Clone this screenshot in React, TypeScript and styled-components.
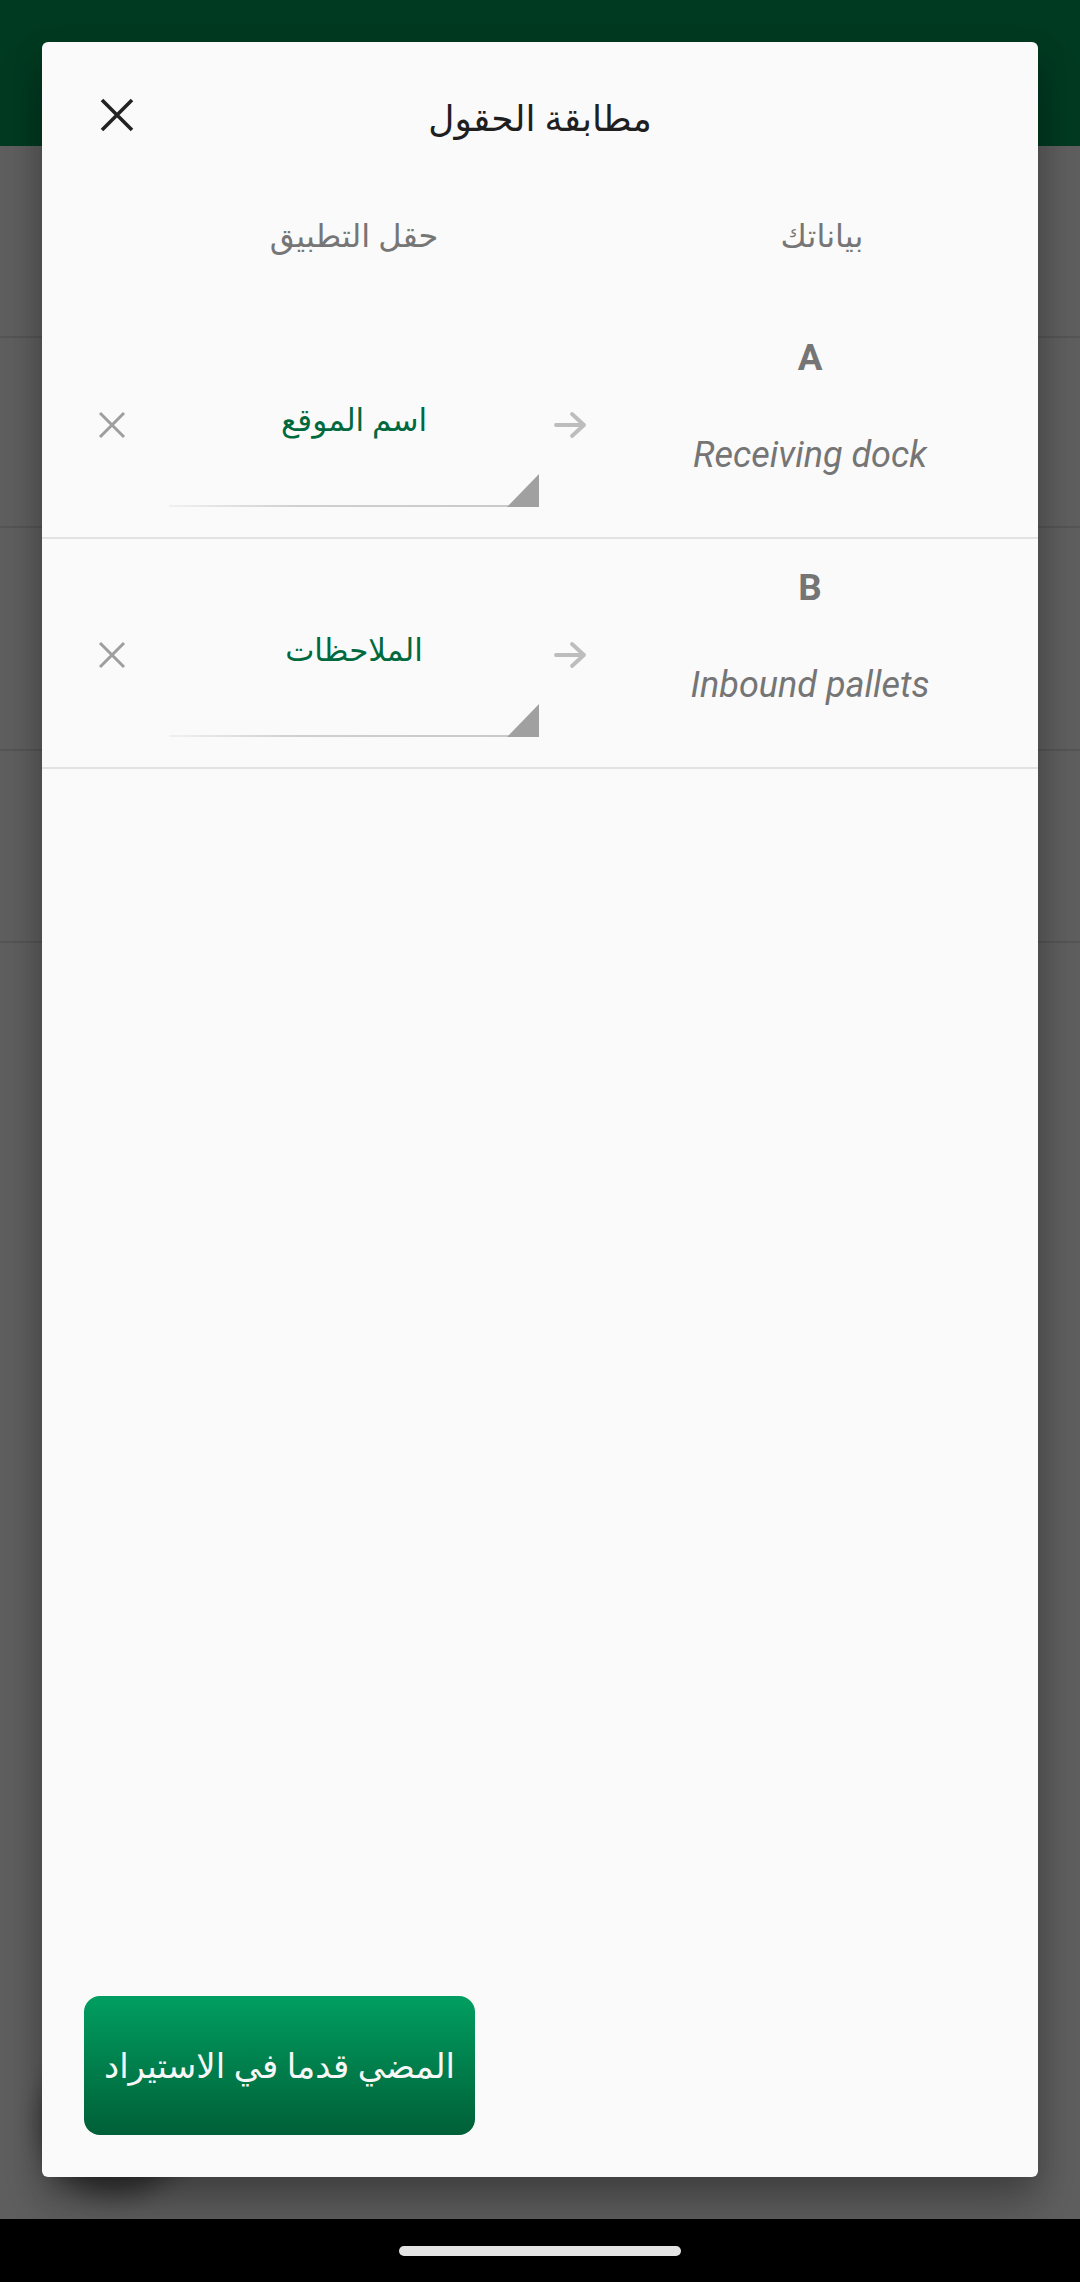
import React from "react";
import styled, { createGlobalStyle } from "styled-components";

const GlobalStyle = createGlobalStyle`
  html, body {
    margin: 0;
    padding: 0;
    background: #000;
  }
  * { box-sizing: border-box; }
`;

const Screen = styled.div`
  width: 1080px;
  height: 2282px;
  display: flex;
  flex-direction: column;
  overflow: hidden;
  font-family: Roboto, "DejaVu Sans", sans-serif;
`;

const Content = styled.div`
  position: relative;
  flex: 1;
  background: #fafafa;
  overflow: hidden;
`;

// the page that sits under the dialog
const AppBar = styled.div`
  height: 146px;
  background: #009958;
`;

const ListRow = styled.div<{ $h: number }>`
  height: ${(p) => p.$h}px;
  border-bottom: 2px solid #e0e0e0;
`;

const Fab = styled.div`
  position: absolute;
  left: 42px;
  bottom: 42px;
  width: 147px;
  height: 147px;
  border-radius: 50%;
  background: #009958;
  box-shadow: 0 18px 26px rgba(0, 0, 0, 0.45);
`;

const Scrim = styled.div`
  position: absolute;
  inset: 0;
  background: rgba(0, 0, 0, 0.62);
`;

const Dialog = styled.div`
  position: absolute;
  inset: 42px;
  background: #fafafa;
  border-radius: 6px;
  display: flex;
  flex-direction: column;
  box-shadow: 0 30px 48px rgba(0, 0, 0, 0.22), 0 10px 30px rgba(0, 0, 0, 0.18);
`;

const TitleBar = styled.div`
  height: 154px;
  display: grid;
  grid-template-columns: 150px 1fr 150px;
  align-items: center;
`;

const CloseButton = styled.button`
  justify-self: start;
  margin-left: 47px;
  margin-top: -8px;
  width: 56px;
  height: 56px;
  padding: 0;
  border: none;
  background: none;
  display: flex;
  align-items: center;
  justify-content: center;
`;

const Title = styled.h1`
  margin: 0;
  text-align: center;
  font-size: 36px;
  font-weight: 400;
  color: #1f1f1f;
`;

const HeaderRow = styled.div`
  height: 113px;
  display: flex;
  align-items: flex-start;
  font-size: 32px;
  line-height: 80px;
  color: #767676;
`;

const HeaderCell = styled.div<{ $app?: boolean }>`
  text-align: center;
  ${(p) =>
    p.$app
      ? "width: 370px; margin-left: 127px;"
      : "flex: 1; margin-left: 67px;"}
`;

const MappingRow = styled.div`
  height: 230px;
  display: flex;
  align-items: flex-start;
  border-bottom: 2px solid #e2e2e2;
`;

const RemoveButton = styled.button`
  margin: 88px 0 0 42px;
  width: 56px;
  height: 56px;
  padding: 0;
  border: none;
  background: none;
  display: flex;
  align-items: center;
  justify-content: center;
`;

const Spinner = styled.div`
  position: relative;
  margin: 88px 0 0 29px;
  width: 370px;
  height: 110px;
  text-align: center;
  font-size: 31px;
  line-height: 48px;
  color: #00693e;

  &::before {
    content: "";
    position: absolute;
    left: 0;
    right: 0;
    bottom: 0;
    height: 2px;
    background: linear-gradient(to right, #f0f0f0, #cfcfcf 35%, #c9c9c9);
  }

  &::after {
    content: "";
    position: absolute;
    right: 0;
    bottom: 0;
    width: 32px;
    height: 33px;
    background: #a0a0a0;
    clip-path: polygon(100% 0, 100% 100%, 0 100%);
  }
`;

const ArrowBox = styled.div`
  margin-top: 88px;
  width: 62px;
  height: 56px;
  display: flex;
  align-items: center;
  justify-content: center;
`;

const DataCell = styled.div`
  flex: 1;
  padding-right: 19px;
  display: flex;
  flex-direction: column;
  align-items: center;
  color: #757575;
`;

const Letter = styled.div`
  margin-top: 27px;
  font-size: 36.75px;
  line-height: 44px;
  font-weight: 700;
`;

const Value = styled.div`
  margin-top: 51px;
  font-size: 36px;
  line-height: 48px;
  font-style: italic;
`;

const Spacer = styled.div`
  flex: 1;
`;

const Footer = styled.div`
  padding: 0 0 42px 42px;
  display: flex;
`;

const ProceedButton = styled.button`
  height: 139px;
  padding: 0 20px;
  border: none;
  border-radius: 16px;
  background: linear-gradient(180deg, #009e61 0%, #007f4c 50%, #005f38 100%);
  color: #f7f7f7;
  font-family: Roboto, "DejaVu Sans", sans-serif;
  font-size: 34px;
`;

const NavBar = styled.div`
  height: 63px;
  background: #000;
  display: flex;
  justify-content: center;
  align-items: center;
`;

const HomePill = styled.div`
  width: 282px;
  height: 10px;
  border-radius: 5px;
  background: #e4e4e4;
`;

const CloseIcon = () => (
  <svg width="34" height="34" viewBox="0 0 34 34">
    <path d="M2 2 L32 32 M32 2 L2 32" stroke="#222" strokeWidth="3.6" />
  </svg>
);

const RemoveIcon = () => (
  <svg width="28" height="28" viewBox="0 0 28 28">
    <path d="M2 2 L26 26 M26 2 L2 26" stroke="#9e9e9e" strokeWidth="3" />
  </svg>
);

const ArrowIcon = () => (
  <svg width="34" height="28" viewBox="0 0 34 28">
    <path
      d="M3 14 H31 M19 3 L31 14 L19 25"
      stroke="#bdbdbd"
      strokeWidth="3.8"
      strokeLinecap="round"
      strokeLinejoin="round"
      fill="none"
    />
  </svg>
);

type Mapping = { column: string; sample: string; field: string };

const mappings: Mapping[] = [
  { column: "A", sample: "Receiving dock", field: "اسم الموقع" },
  { column: "B", sample: "Inbound pallets", field: "الملاحظات" },
];

export default function App() {
  return (
    <>
      <GlobalStyle />
      <Screen>
        <Content>
          <AppBar />
          <ListRow $h={192} />
          <ListRow $h={190} />
          <ListRow $h={223} />
          <ListRow $h={192} />
          <Fab />
          <Scrim />
          <Dialog>
            <TitleBar>
              <CloseButton aria-label="close">
                <CloseIcon />
              </CloseButton>
              <Title lang="ar">مطابقة الحقول</Title>
            </TitleBar>
            <HeaderRow lang="ar">
              <HeaderCell $app>حقل التطبيق</HeaderCell>
              <HeaderCell>بياناتك</HeaderCell>
            </HeaderRow>
            {mappings.map((m) => (
              <MappingRow key={m.column}>
                <RemoveButton aria-label="remove">
                  <RemoveIcon />
                </RemoveButton>
                <Spinner lang="ar">{m.field}</Spinner>
                <ArrowBox>
                  <ArrowIcon />
                </ArrowBox>
                <DataCell>
                  <Letter>{m.column}</Letter>
                  <Value>{m.sample}</Value>
                </DataCell>
              </MappingRow>
            ))}
            <Spacer />
            <Footer>
              <ProceedButton lang="ar">المضي قدما في الاستيراد</ProceedButton>
            </Footer>
          </Dialog>
        </Content>
        <NavBar>
          <HomePill />
        </NavBar>
      </Screen>
    </>
  );
}
